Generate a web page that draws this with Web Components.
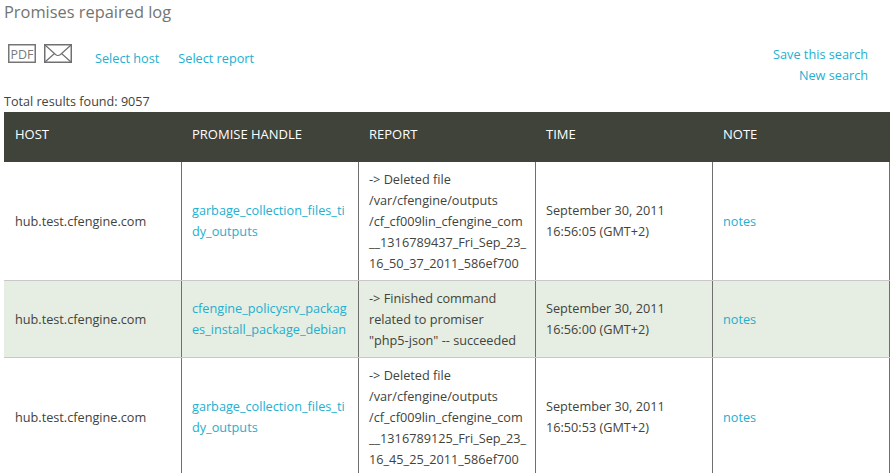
<!DOCTYPE html>
<html>
<head>
<meta charset="utf-8">
<title>Promises repaired log</title>
<style>
    html, body { margin: 0; padding: 0; background: #fff; overflow: hidden; height: 473px; }
    body { font-family: "Open Sans", sans-serif; }
</style>
</head>
<body>
<report-page heading="Promises repaired log" total="Total results found: 9057">
    <result-row
        host="hub.test.cfengine.com"
        handle="garbage_collection_files_tidy_outputs"
        report="-> Deleted file /var/cfengine/outputs /cf_cf009lin_cfengine_com __1316789437_Fri_Sep_23_ 16_50_37_2011_586ef700"
        date="September 30, 2011"
        clock="16:56:05 (GMT+2)"></result-row>
    <result-row alt
        host="hub.test.cfengine.com"
        handle="cfengine_policysrv_packages_install_package_debian"
        report="-> Finished command related to promiser&#10;&quot;php5-json&quot; -- succeeded"
        date="September 30, 2011"
        clock="16:56:00 (GMT+2)"></result-row>
    <result-row
        host="hub.test.cfengine.com"
        handle="garbage_collection_files_tidy_outputs"
        report="-> Deleted file /var/cfengine/outputs /cf_cf009lin_cfengine_com __1316789125_Fri_Sep_23_ 16_45_25_2011_586ef700"
        date="September 30, 2011"
        clock="16:50:53 (GMT+2)"></result-row>
</report-page>

<script>
class ReportToolbar extends HTMLElement {
    constructor() {
        super();
        this.attachShadow({ mode: 'open' });
    }

    connectedCallback() {
        this.shadowRoot.innerHTML = `
            <style>
                :host {
                    display: flex;
                    justify-content: space-between;
                    padding: 0 26px 0 8px;
                    height: 48px;
                    font-size: 12.7px;
                    line-height: 21px;
                }
                a { color: #22afd0; text-decoration: none; }
                .left { display: flex; align-items: flex-start; }
                .icons { display: flex; gap: 8px; padding-top: 1px; margin-right: 23px; }
                svg { display: block; }
                .links { display: flex; gap: 19px; padding-top: 5px; }
                .right { display: flex; flex-direction: column; align-items: flex-end; padding-top: 1px; }
            </style>
            <div class="left">
                <div class="icons">
                    <svg width="28" height="19" viewBox="0 0 28 19">
                        <rect x="0.75" y="0.75" width="26.5" height="17.5" fill="#fff" stroke="#767676" stroke-width="1.5"/>
                        <text x="14" y="14.5" text-anchor="middle" font-family="Open Sans" font-size="13.5" textLength="23" lengthAdjust="spacingAndGlyphs" fill="#7a7a7a">PDF</text>
                    </svg>
                    <svg width="28" height="19" viewBox="0 0 28 19" fill="none" stroke="#707070">
                        <rect x="0.75" y="0.75" width="26.5" height="17.5" stroke-width="1.5"/>
                        <path d="M1 1 L11.5 10.5 Q14 12.5 16.5 10.5 L27 1 M1 18 L10.5 9.5 M27 18 L17.5 9.5" stroke-width="1.2"/>
                    </svg>
                </div>
                <div class="links">
                    <a href="#">Select host</a>
                    <a href="#">Select report</a>
                </div>
            </div>
            <div class="right">
                <a href="#">Save this search</a>
                <a href="#">New search</a>
            </div>
        `;
    }
}

class ResultRow extends HTMLElement {
    constructor() {
        super();
        this.attachShadow({ mode: 'open' });
    }

    connectedCallback() {
        const get = (name) => (this.getAttribute(name) || '').replace(/&/g, '&amp;').replace(/</g, '&lt;').replace(/>/g, '&gt;');

        this.shadowRoot.innerHTML = `
            <style>
                :host {
                    display: grid;
                    grid-template-columns: 178px repeat(4, 177px);
                    font-size: 12.7px;
                    line-height: 21px;
                    color: #41433c;
                    background: #fff;
                    border-bottom: 1px solid #c8c8c8;
                }
                :host([alt]) { background: #e6ede2; }
                a { color: #22afd0; text-decoration: none; }
                .cell {
                    display: flex;
                    align-items: center;
                    padding: 7px 8px 6px 10px;
                    border-right: 1px solid #6f6f6f;
                    min-width: 0;
                }
                .cell:first-of-type { padding-left: 11px; }
                .cell > div, .cell > a { min-width: 0; }
                .two-line { padding-top: 6px; padding-bottom: 7px; }
                .wrap { word-break: break-all; }
                .report { overflow-wrap: anywhere; white-space: pre-line; }
            </style>
            <div class="cell">${get('host')}</div>
            <div class="cell two-line"><a class="wrap" href="#">${get('handle')}</a></div>
            <div class="cell"><div class="report">${get('report')}</div></div>
            <div class="cell two-line"><div>${get('date')}<br>${get('clock')}</div></div>
            <div class="cell"><a href="#">notes</a></div>
        `;
    }
}

class ReportPage extends HTMLElement {
    constructor() {
        super();
        this.attachShadow({ mode: 'open' });
    }

    connectedCallback() {
        const heading = this.getAttribute('heading') || '';
        const total = this.getAttribute('total') || '';

        this.shadowRoot.innerHTML = `
            <style>
                :host {
                    display: block;
                    padding: 0 5px 0 4px;
                    color: #41433c;
                }
                h1 {
                    margin: 0;
                    height: 43px;
                    font-size: 16.4px;
                    line-height: 24px;
                    font-weight: 400;
                    color: #73756f;
                }
                .total {
                    height: 21px;
                    font-size: 12.6px;
                    line-height: 21px;
                }
                .head {
                    display: grid;
                    grid-template-columns: 178px repeat(4, 177px);
                    height: 50px;
                    background: #3f433a;
                    color: #fff;
                    font-size: 13px;
                    line-height: 44px;
                }
                .head div { padding-left: 10px; }
                .head div:first-child { padding-left: 11px; }
                report-toolbar { margin: 0 -4px; }
            </style>
            <h1>${heading}</h1>
            <report-toolbar></report-toolbar>
            <div class="total">${total}</div>
            <div class="head">
                <div>HOST</div>
                <div>PROMISE HANDLE</div>
                <div>REPORT</div>
                <div>TIME</div>
                <div>NOTE</div>
            </div>
            <slot></slot>
        `;
    }
}

customElements.define('report-toolbar', ReportToolbar);
customElements.define('result-row', ResultRow);
customElements.define('report-page', ReportPage);
</script>
</body>
</html>
